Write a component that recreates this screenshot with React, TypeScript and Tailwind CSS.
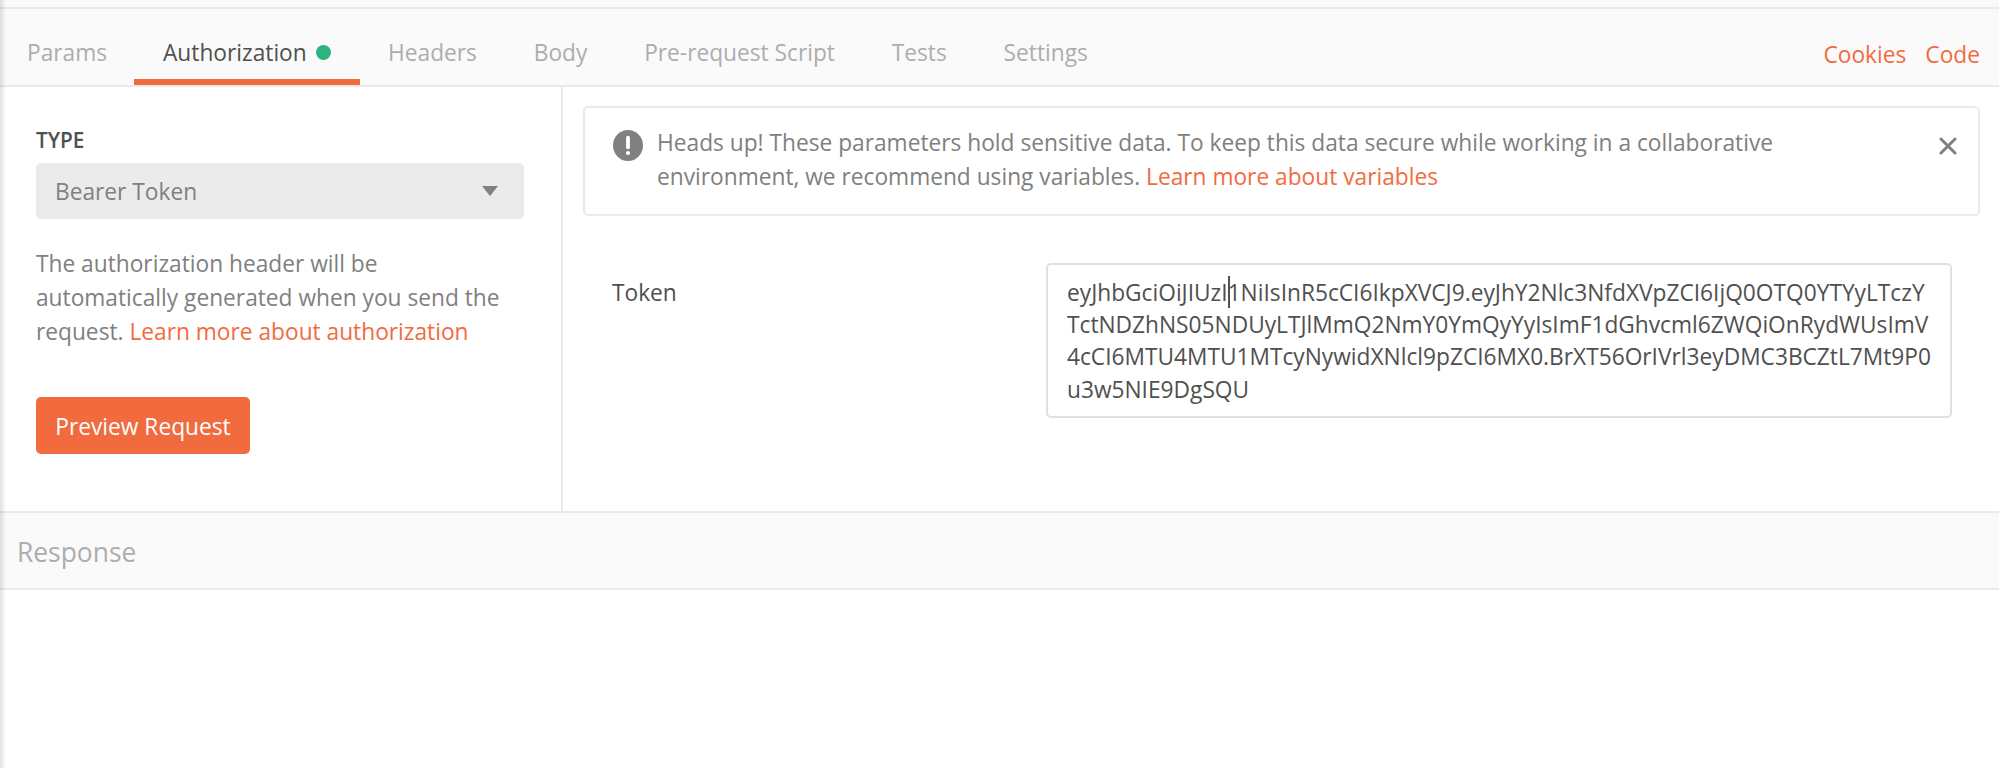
import React from "react";

const tabs = ["Headers", "Body", "Pre-request Script", "Tests", "Settings"];

const tokenLines = [
  "TctNDZhNS05NDUyLTJlMmQ2NmY0YmQyYyIsImF1dGhvcml6ZWQiOnRydWUsImV",
  "4cCI6MTU4MTU1MTcyNywidXNlcl9pZCI6MX0.BrXT56OrIVrl3eyDMC3BCZtL7Mt9P0",
  "u3w5NIE9DgSQU",
];

function TabBar() {
  return (
    <nav className="flex h-[80px] shrink-0 items-stretch justify-between border-y-2 border-[#eaeaea] bg-[#fafafa] pl-[26px] pr-[19px] leading-[34px] text-[#adadad]">
      <div className="flex">
        <div className="w-[108px] pl-px pt-[27px]">Params</div>
        <div className="mr-[28px] flex w-[226px] items-start gap-[9px] border-b-[6px] border-[#f26b3f] pl-[29px] pt-[27px] text-[#505050]">
          <span>Authorization</span>
          <span className="mt-[9px] size-[15px] rounded-full bg-[#2cb47f]" />
        </div>
        <div className="flex gap-[56.8px] pt-[27px]">
          {tabs.map((t) => (
            <span key={t}>{t}</span>
          ))}
        </div>
      </div>
      <div className="flex gap-[19px] pt-[29px] text-[#f26b3f]">
        <a>Cookies</a>
        <a>Code</a>
      </div>
    </nav>
  );
}

function AuthSidebar() {
  return (
    <aside className="flex w-[563px] shrink-0 flex-col items-start border-r-2 border-[#eaeaea] pl-[36px] pt-[38px] text-[#808080]">
      <h2 className="h-[38px] text-[20.8px] font-semibold leading-[30px] text-[#505050]">TYPE</h2>
      <button className="flex h-[56px] w-[488px] items-center justify-between rounded-[5px] bg-[#ebebeb] pl-[19px] pr-[26px] leading-[34px]">
        <span className="pt-[2px]">Bearer Token</span>
        <svg width="16" height="10" viewBox="0 0 16 10" fill="#808080">
          <path d="M0 0h16L8 10z" />
        </svg>
      </button>
      <p className="mt-[28px] w-[480px] leading-[34px]">
        The authorization header will be
        <br />
        automatically generated when you send the
        <br />
        request. <a className="text-[#f26b3f]">Learn more about authorization</a>
      </p>
      <button className="mt-[48px] h-[57px] w-[214px] rounded-[5px] bg-[#f26b3f] pt-[2px] leading-[34px] text-white">
        Preview Request
      </button>
    </aside>
  );
}

function Notice() {
  return (
    <div className="flex h-[110px] items-start rounded-[5px] border-2 border-[#eaeaea] pl-[28px] pr-[21px] pt-[18px] leading-[34px] text-[#808080]">
      <svg className="mr-[14px] mt-[4px] shrink-0" width="30" height="31" viewBox="0 0 30 31">
        <ellipse cx="15" cy="15.5" rx="15" ry="15.5" fill="#808080" />
        <path d="M15 7.7v9.6" stroke="#fff" strokeWidth="3.8" strokeLinecap="round" />
        <circle cx="15" cy="23" r="2.1" fill="#fff" />
      </svg>
      <p className="grow">
        Heads up! These parameters hold sensitive data. To keep this data secure while working in a collaborative
        <br />
        environment, we recommend using variables. <a className="text-[#f26b3f]">Learn more about variables</a>
      </p>
      <svg className="mt-[11px] shrink-0" width="18" height="18" viewBox="0 0 18 18" stroke="#808080" strokeWidth="3" strokeLinecap="round">
        <path d="M2 2l14 14M16 2L2 16" />
      </svg>
    </div>
  );
}

export default function App() {
  return (
    <div className="relative flex h-[768px] w-[1999px] flex-col overflow-hidden whitespace-nowrap bg-white font-['Open_Sans','Noto_Sans',sans-serif] text-[22.72px]">
      <div className="h-[7px] shrink-0 bg-[#fafafa]" />
      <TabBar />
      <main className="flex h-[424px] shrink-0">
        <AuthSidebar />
        <section className="grow pl-[20px] pr-[19px] pt-[19px]">
          <Notice />
          <div className="mt-[47px] flex items-start justify-between pl-[29px] pr-[28px] text-[#505050]">
            <label className="pt-[13px] leading-[34px]">Token</label>
            <div className="h-[155px] w-[906px] rounded-[5px] border-2 border-[#e0e0e0] pl-[19px] pt-[12px] leading-[32.2px]">
              <div>
                eyJhbGciOiJIUzI
                <span className="relative">
                  <span className="absolute left-0 -top-px h-[32px] w-[2px] bg-[#505050]" />
                </span>
                1NiIsInR5cCI6IkpXVCJ9.eyJhY2Nlc3NfdXVpZCI6IjQ0OTQ0YTYyLTczY
              </div>
              {tokenLines.map((l) => (
                <div key={l}>{l}</div>
              ))}
            </div>
          </div>
        </section>
      </main>
      <header className="h-[79px] shrink-0 border-y-2 border-[#eaeaea] bg-[#fafafa] pl-[17px] pt-[19px] text-[26.4px] leading-[40px] text-[#adadad]">
        Response
      </header>
      <div className="absolute inset-y-0 left-0 w-[6px] bg-linear-to-r from-black/12 to-transparent" />
    </div>
  );
}
